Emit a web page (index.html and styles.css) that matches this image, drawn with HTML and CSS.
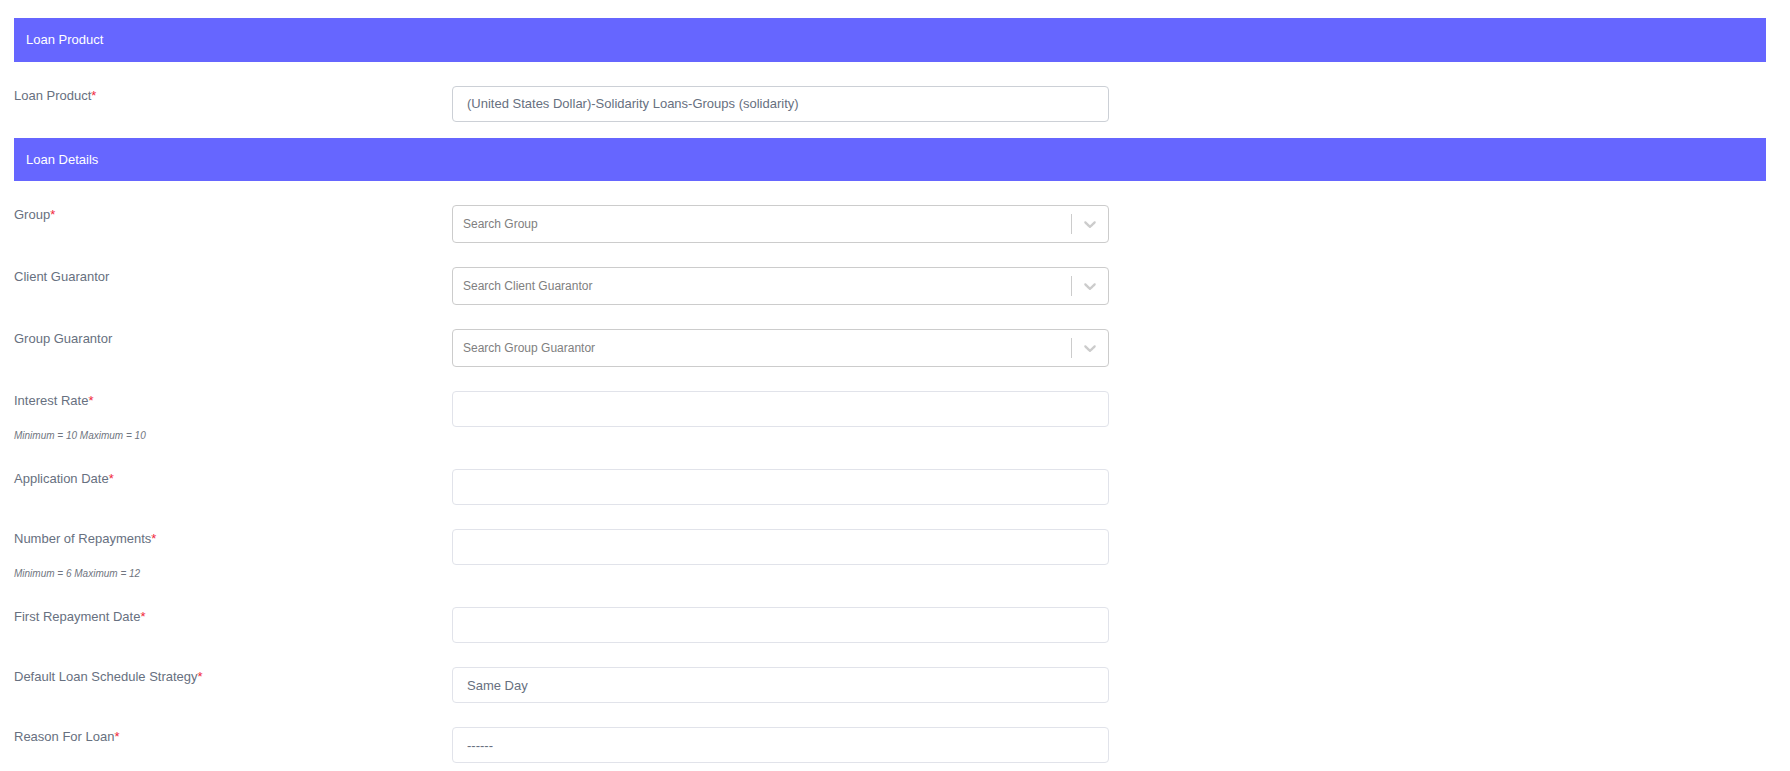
FILE: index.html
```html
<!DOCTYPE html>
<html lang="en">
<head>
  <meta charset="UTF-8">
  <meta name="viewport" content="width=device-width, initial-scale=1.0">
  <title>New Group Loan Application</title>
  <link rel="stylesheet" href="styles.css">
</head>
<body>
  <form class="loan-form">
    <!-- Loan product -->
    <section class="form-section">
      <div class="section-header">Loan Product</div>
      <div class="section-body">
        <div class="form-row">
          <div class="label-col">
            <label class="form-label">Loan Product<span class="req">*</span></label>
          </div>
          <div class="field-col">
            <input type="text" class="form-control form-control-product" value="(United States Dollar)-Solidarity Loans-Groups (solidarity)" readonly>
          </div>
        </div>
      </div>
    </section>

    <!-- Loan details -->
    <section class="form-section">
      <div class="section-header">Loan Details</div>
      <div class="section-body">
        <div class="form-row">
          <div class="label-col">
            <label class="form-label">Group<span class="req">*</span></label>
          </div>
          <div class="field-col">
            <div class="search-select">
              <div class="search-placeholder">Search Group</div>
              <span class="indicator-sep"></span>
              <span class="indicator">
                <svg viewBox="0 0 20 20" width="20" height="20"><path d="M4.516 7.548c0.436-0.446 1.043-0.481 1.576 0l3.908 3.747 3.908-3.747c0.533-0.481 1.141-0.446 1.574 0 0.436 0.445 0.408 1.197 0 1.615-0.406 0.418-4.695 4.502-4.695 4.502-0.217 0.223-0.502 0.335-0.787 0.335s-0.57-0.112-0.789-0.335c0 0-4.287-4.084-4.695-4.502s-0.436-1.17 0-1.615z"/></svg>
              </span>
            </div>
          </div>
        </div>

        <div class="form-row">
          <div class="label-col">
            <label class="form-label">Client Guarantor</label>
          </div>
          <div class="field-col">
            <div class="search-select">
              <div class="search-placeholder">Search Client Guarantor</div>
              <span class="indicator-sep"></span>
              <span class="indicator">
                <svg viewBox="0 0 20 20" width="20" height="20"><path d="M4.516 7.548c0.436-0.446 1.043-0.481 1.576 0l3.908 3.747 3.908-3.747c0.533-0.481 1.141-0.446 1.574 0 0.436 0.445 0.408 1.197 0 1.615-0.406 0.418-4.695 4.502-4.695 4.502-0.217 0.223-0.502 0.335-0.787 0.335s-0.57-0.112-0.789-0.335c0 0-4.287-4.084-4.695-4.502s-0.436-1.17 0-1.615z"/></svg>
              </span>
            </div>
          </div>
        </div>

        <div class="form-row">
          <div class="label-col">
            <label class="form-label">Group Guarantor</label>
          </div>
          <div class="field-col">
            <div class="search-select">
              <div class="search-placeholder">Search Group Guarantor</div>
              <span class="indicator-sep"></span>
              <span class="indicator">
                <svg viewBox="0 0 20 20" width="20" height="20"><path d="M4.516 7.548c0.436-0.446 1.043-0.481 1.576 0l3.908 3.747 3.908-3.747c0.533-0.481 1.141-0.446 1.574 0 0.436 0.445 0.408 1.197 0 1.615-0.406 0.418-4.695 4.502-4.695 4.502-0.217 0.223-0.502 0.335-0.787 0.335s-0.57-0.112-0.789-0.335c0 0-4.287-4.084-4.695-4.502s-0.436-1.17 0-1.615z"/></svg>
              </span>
            </div>
          </div>
        </div>

        <div class="form-row">
          <div class="label-col">
            <label class="form-label">Interest Rate<span class="req">*</span></label>
            <div class="form-hint">Minimum = 10 Maximum = 10</div>
          </div>
          <div class="field-col">
            <input type="text" class="form-control">
          </div>
        </div>

        <div class="form-row">
          <div class="label-col">
            <label class="form-label">Application Date<span class="req">*</span></label>
          </div>
          <div class="field-col">
            <input type="text" class="form-control">
          </div>
        </div>

        <div class="form-row">
          <div class="label-col">
            <label class="form-label">Number of Repayments<span class="req">*</span></label>
            <div class="form-hint">Minimum = 6 Maximum = 12</div>
          </div>
          <div class="field-col">
            <input type="text" class="form-control">
          </div>
        </div>

        <div class="form-row">
          <div class="label-col">
            <label class="form-label">First Repayment Date<span class="req">*</span></label>
          </div>
          <div class="field-col">
            <input type="text" class="form-control">
          </div>
        </div>

        <div class="form-row">
          <div class="label-col">
            <label class="form-label">Default Loan Schedule Strategy<span class="req">*</span></label>
          </div>
          <div class="field-col">
            <input type="text" class="form-control" value="Same Day" readonly>
          </div>
        </div>

        <div class="form-row">
          <div class="label-col">
            <label class="form-label">Reason For Loan<span class="req">*</span></label>
          </div>
          <div class="field-col">
            <input type="text" class="form-control" value="------" readonly>
          </div>
        </div>
      </div>
    </section>
  </form>
</body>
</html>
```

FILE: styles.css
```css
body {
  font-family: "Liberation Sans", Arial, sans-serif;
  margin: 0;
  padding: 18px 24px 0 14px;
  background-color: #fff;
  color: #677080;
  font-size: 13px;
}
.loan-form {
  margin: 0;
}
.section-header {
  background-color: #6666ff;
  color: #fff;
  height: 43.5px;
  line-height: 43.5px;
  padding: 0 12px;
  font-size: 13px;
}
.section-body {
  display: flex;
  flex-direction: column;
  gap: 24px;
  padding: 24px 0 16px;
}
.form-row {
  display: grid;
  grid-template-columns: 438px 657px;
  align-items: start;
}
.form-label {
  display: block;
  line-height: 20px;
  color: #677080;
}
.req {
  color: #f0283c;
}
.form-hint {
  margin-top: 16px;
  line-height: 18px;
  font-size: 10px;
  font-style: italic;
  color: #6f7580;
}
.form-control {
  display: block;
  box-sizing: border-box;
  width: 100%;
  height: 36px;
  padding: 0 14px;
  border: 1px solid #e1e3ea;
  border-radius: 4px;
  background-color: #fff;
  font-family: inherit;
  font-size: 13px;
  color: #677080;
  outline: none;
}
.form-control-product {
  border-color: #ccd0d6;
}
.search-select {
  display: flex;
  align-items: center;
  box-sizing: border-box;
  height: 38px;
  border: 1px solid #ccc;
  border-radius: 4px;
  background-color: #fff;
}
.search-placeholder {
  flex: 1;
  padding: 0 10px;
  font-size: 12px;
  color: #808080;
}
.indicator-sep {
  align-self: stretch;
  width: 1px;
  margin: 8px 0;
  background-color: #ccc;
}
.indicator {
  display: flex;
  padding: 8px;
}
.indicator svg {
  fill: #ccc;
}
```
